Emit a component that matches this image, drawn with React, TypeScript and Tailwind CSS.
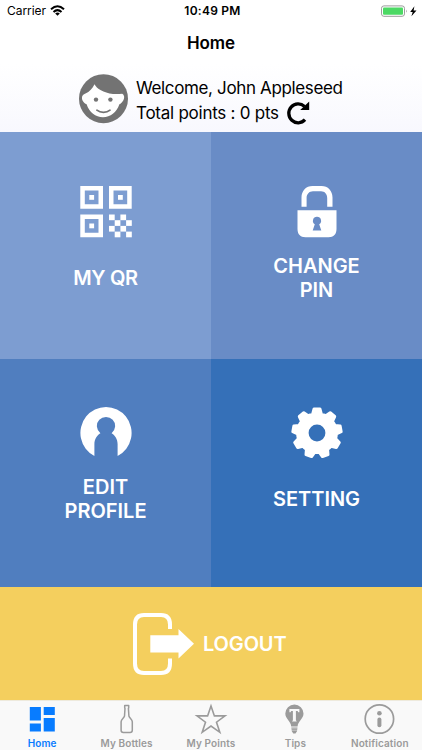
import type { ReactNode } from "react";

function polar(radius: number, degrees: number) {
  const a = (degrees * Math.PI) / 180;
  return `${(26 + radius * Math.sin(a)).toFixed(2)} ${(26 - radius * Math.cos(a)).toFixed(2)}`;
}

// nine-toothed gear outline around (26, 26)
const GEAR = Array.from({ length: 9 }, (_, i) => {
  const c = i * 40;
  return `${i === 0 ? "M" : "L"}${polar(19.4, c - 13)} L${polar(24.2, c - 7)} L${polar(24.2, c + 7)} L${polar(19.4, c + 13)} A19.4 19.4 0 0 1 ${polar(19.4, c + 27)}`;
}).join(" ") + "Z";

function QrIcon() {
  return (
    <svg width="52" height="52" viewBox="0 0 52 52" fill="#fff">
      {[[0.3, 0], [29, 0], [0.3, 28.5]].map(([x, y]) => (
        <g key={`${x}-${y}`} transform={`translate(${x} ${y})`}>
          <path fillRule="evenodd" d="M0 0H22.7V22.7H0ZM4.5 4.5V18.2H18.2V4.5Z" />
          <rect x="9" y="9" width="4.8" height="4.8" />
        </g>
      ))}
      {[[0, 0], [2, 0], [1, 1], [3, 1], [0, 2], [2, 2], [1, 3], [3, 3]].map(([c, r]) => (
        <rect key={`${c}${r}`} x={29 + c * 5.7} y={28.5 + r * 5.7} width="5.7" height="5.7" />
      ))}
    </svg>
  );
}

function LockIcon() {
  return (
    <svg width="40" height="52" viewBox="0 0 40 52" fill="#fff">
      <path d="M4.5 20.8V11.5C4.5 4.8 9 0 15.5 0H24.5C31 0 35.5 4.8 35.5 11.5V20.8H30.2V12C30.2 8 27.8 5.2 24 5.2H16C12.2 5.2 9.6 8 9.6 12V20.8Z" />
      <path
        fillRule="evenodd"
        d="M0.5 24.3H39.5V43C39.5 48.2 36.7 51.2 31.5 51.2H8.5C3.3 51.2 0.5 48.2 0.5 43ZM20 30.8A4 4 0 0 0 17.8 38.2L15.7 44.4H24.3L22.2 38.2A4 4 0 0 0 20 30.8Z"
      />
    </svg>
  );
}

function ProfileIcon() {
  return (
    <svg width="52" height="52" viewBox="0 0 52 52">
      <path
        fill="#fff"
        d="M14.4 50.2A25.6 25.9 0 1 1 37.6 50.2V38.5C37.6 33 34.8 29.5 31.6 27.4A9.1 9.1 0 1 0 20.4 27.4C17.2 29.5 14.4 33 14.4 38.5Z"
        transform="translate(0 -1.2)"
      />
    </svg>
  );
}

function SettingIcon() {
  return (
    <svg width="52" height="52" viewBox="0 0 52 52">
      <path d={`${GEAR} M34.4 26A8.4 8.4 0 1 0 17.6 26A8.4 8.4 0 1 0 34.4 26Z`} fill="#fff" fillRule="evenodd" />
      <path d={GEAR} fill="none" stroke="#fff" strokeWidth="3" strokeLinejoin="round" />
    </svg>
  );
}

function FaceIcon() {
  return (
    <svg width="50" height="50" viewBox="0 0 50 50">
      <circle cx="25.5" cy="24.7" r="24.5" fill="#737373" />
      <path
        fill="#fff"
        d="M16.5 10.3C18.5 14.5 25.5 19.1 35 19.9C38.5 20.2 41.5 19.9 44.2 19.7C46.3 20.8 46.8 23.5 45.4 26.2C44.4 28.1 42.8 29.6 41.4 30.3C38.5 38.5 32.5 43.3 25 43.3C17.5 43.3 11.4 38.5 8.6 30.3C5.5 29.3 3.2 25.5 4.2 22.3C5 20.7 6.1 20.2 7.5 19.6C11.5 18.1 14.5 14.3 16.5 10.3Z"
      />
      <circle cx="18" cy="25.6" r="2.2" fill="#737373" />
      <circle cx="32.4" cy="25.6" r="2.2" fill="#737373" />
      <path d="M18.9 36.2C22.5 39 28.5 39 32 36.2" stroke="#737373" strokeWidth="1.7" strokeLinecap="round" fill="none" />
    </svg>
  );
}

const TILES: { label: ReactNode; icon: ReactNode; bg: string }[] = [
  { label: <span className="tracking-[-0.35px]">MY QR</span>, icon: <QrIcon />, bg: "bg-[#7d9dd1] pt-[54px]" },
  { label: <>CHANGE<br />PIN</>, icon: <LockIcon />, bg: "bg-[#698cc6] pt-[54px]" },
  { label: <>EDIT<br />PROFILE</>, icon: <ProfileIcon />, bg: "bg-[#507ebf] pt-12" },
  { label: "SETTING", icon: <SettingIcon />, bg: "bg-[#3570b8] pt-12" },
];

const TABS = [
  {
    label: "Home",
    color: "text-[#087cff]",
    icon: (
      <path fill="currentColor" d="M4.8 4.1H15.9V17.5H4.8ZM18.7 4.1H29.8V12.1H18.7ZM4.8 20.5H15.9V28.5H4.8ZM18.7 15.1H29.8V28.5H18.7Z" />
    ),
  },
  {
    label: "My Bottles",
    color: "text-[#9b9b9b]",
    icon: (
      <path
        fill="none"
        stroke="currentColor"
        strokeWidth="1.5"
        strokeLinejoin="round"
        d="M14.7 2.5H18.7V4.8L18.4 5.4L18.9 13C19.5 15.2 22.3 16.2 22.3 18.8V27.3Q22.3 29.4 20.1 29.4H13.3Q11.1 29.4 11.1 27.3V18.8C11.1 16.2 13.9 15.2 14.5 13L15 5.4L14.7 4.8Z"
      />
    ),
  },
  {
    label: "My Points",
    color: "text-[#9b9b9b]",
    icon: (
      <path
        fill="none"
        stroke="currentColor"
        strokeWidth="1.6"
        d="M17 3L20.4 12.9H31L22.5 19.2L25.8 29.3L17 23.1L8.2 29.3L11.5 19.2L3 12.9H13.6Z"
      />
    ),
  },
  {
    label: "Tips",
    color: "text-[#9b9b9b]",
    icon: (
      <>
        <path fill="currentColor" d="M16.4 1.5A9.1 9.1 0 0 0 7.3 10.6C7.3 16.1 12.9 18.1 13.2 23.6H19.6C19.9 18.1 25.5 16.1 25.5 10.6A9.1 9.1 0 0 0 16.4 1.5ZM13.3 24.4H19.5L19 28.3L17.5 30.4H15.3L13.8 28.3Z" />
        <path fill="#f9f9f9" d="M11.4 5.9H21.4V9.3H20.2L19.6 8.1H17.9V17.2L18.8 18.4H14L14.9 17.2V8.1H13.2L12.6 9.3H11.4Z" />
        <path stroke="#f9f9f9" strokeWidth=".4" d="M13.2 25.8H19.8M13.2 27.4H19.8" />
      </>
    ),
  },
  {
    label: "Notification",
    color: "text-[#9b9b9b]",
    icon: (
      <>
        <circle cx="16.4" cy="16" r="14.2" fill="none" stroke="currentColor" strokeWidth="1.7" />
        <circle cx="16.4" cy="10.2" r="2.3" fill="currentColor" />
        <path d="M16.4 16.4V22.2" stroke="currentColor" strokeWidth="4" strokeLinecap="round" />
      </>
    ),
  },
];

function StatusBar() {
  return (
    <div className="grid grid-cols-3 items-center h-[22px] pl-[7px] pr-[5px] text-[12px] leading-none">
      <div className="flex items-center gap-1">
        <span className="tracking-[-0.05px]">Carrier</span>
        <svg width="15" height="12" viewBox="0 0 15 12" fill="none" stroke="#000" strokeWidth="2">
          <path d="M1 4.2Q7.5 -1.8 14 4.2M3.5 7Q7.5 3.2 11.5 7" />
          <path d="M5.2 8.5Q7.5 6.6 9.8 8.5L7.5 10.8Z" fill="#000" stroke="none" />
        </svg>
      </div>
      <div className="pl-[1px] text-center font-semibold tracking-[0.25px]">10:49 PM</div>
      <div className="flex justify-end">
        <svg width="37" height="13" viewBox="0 0 37 13">
          <rect x="1.5" y="0.9" width="23" height="10.4" rx="2.4" fill="#fff" stroke="#9c9c9c" />
          <rect x="3" y="2.4" width="20" height="7.4" rx="1" fill="#4cd964" />
          <path d="M26 4.4Q27.6 6.1 26 7.8Z" fill="#9c9c9c" />
          <path d="M34.4 1.3L30.2 7H32.7L31.4 11.3L36.5 5.4H33.6Z" fill="#000" />
        </svg>
      </div>
    </div>
  );
}

export default function App() {
  return (
    <div className="w-[422px] h-[750px] flex flex-col overflow-hidden bg-white text-black font-[Inter,sans-serif]">
      <StatusBar />
      <h1 className="h-[42px] text-center text-[17px] font-semibold leading-[42px] tracking-[-0.15px]">Home</h1>

      <div className="h-[68px] flex pl-[78px] pt-[10px] bg-linear-to-b from-white to-[#f8f8fe]">
        <FaceIcon />
        <div className="ml-2 pt-[2px] text-[17px] leading-[24.5px] tracking-[-0.36px] whitespace-nowrap">
          <div>Welcome, John Appleseed</div>
          <div className="flex tracking-[-0.25px]">
            <span>Total points : 0 pts</span>
            <svg className="ml-[7px]" width="24" height="24" viewBox="0 0 24 24">
              <path d="M19 18.7A9.3 9.5 0 1 1 18.5 5.4" fill="none" stroke="#000" strokeWidth="3.3" />
              <path d="M23.2 0.6V8.9H14.2Z" />
            </svg>
          </div>
        </div>
      </div>

      <div className="grid grid-cols-2 grid-rows-[227px_228px]">
        {TILES.map((tile, i) => (
          <div key={i} className={`${tile.bg} flex flex-col items-center gap-4`}>
            {tile.icon}
            <div className="h-12 flex items-center text-center text-[20px] leading-6 font-semibold text-white">
              <span>{tile.label}</span>
            </div>
          </div>
        ))}
      </div>

      <div className="h-[113px] flex items-center pl-[133px] gap-2 bg-[#f4cf5e]">
        <svg width="62" height="62" viewBox="0 0 62 62">
          <path
            d="M37 16V11.5Q37 2 28 2H11Q2 2 2 11.5V50.5Q2 60 11 60H28Q37 60 37 50.5V45.5"
            fill="none"
            stroke="#fff"
            strokeWidth="4"
          />
          <path d="M17.3 22.3H45.5V16L61 30.8L45.5 45.5V39.5H17.3Z" fill="#fff" />
        </svg>
        <span className="text-[20px] leading-6 font-semibold tracking-[-0.15px] text-white">LOGOUT</span>
      </div>

      <nav className="grid grid-cols-5 h-[50px] bg-[#f9f9f9] border-t border-[#eeeadd]">
        {TABS.map((tab) => (
          <div key={tab.label} className={`${tab.color} flex flex-col items-center pt-[2px]`}>
            <svg width="34" height="34" viewBox="0 0 34 34">
              {tab.icon}
            </svg>
            <span className="text-[10px] leading-3 font-semibold tracking-[0.1px] whitespace-nowrap">{tab.label}</span>
          </div>
        ))}
      </nav>
    </div>
  );
}
